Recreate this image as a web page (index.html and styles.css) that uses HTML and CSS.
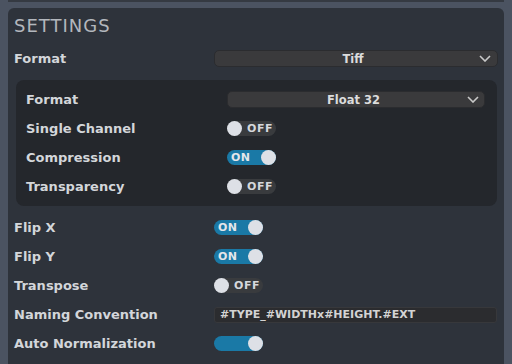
FILE: index.html
```html
<!DOCTYPE html>
<html lang="en">
<head>
    <meta charset="UTF-8">
    <meta name="viewport" content="width=device-width, initial-scale=1.0">
    <title>Settings</title>
    <link rel="stylesheet" href="styles.css">
</head>
<body>
    <div class="prev-panel"></div>

    <section class="panel">
        <h2 class="title">SETTINGS</h2>

        <div class="row">
            <span class="label">Format</span>
            <div class="select">
                <span class="select-value">Tiff</span>
                <svg class="chevron" width="12" height="7" viewBox="0 0 12 7"><polyline points="1,1 6,6 11,1"/></svg>
            </div>
        </div>

        <div class="group">
            <div class="row">
                <span class="label">Format</span>
                <div class="select">
                    <span class="select-value">Float 32</span>
                    <svg class="chevron" width="12" height="7" viewBox="0 0 12 7"><polyline points="1,1 6,6 11,1"/></svg>
                </div>
            </div>
            <div class="row">
                <span class="label">Single Channel</span>
                <span class="toggle off"><span class="knob"></span><span class="toggle-text">OFF</span></span>
            </div>
            <div class="row">
                <span class="label">Compression</span>
                <span class="toggle on"><span class="toggle-text">ON</span><span class="knob"></span></span>
            </div>
            <div class="row">
                <span class="label">Transparency</span>
                <span class="toggle off"><span class="knob"></span><span class="toggle-text">OFF</span></span>
            </div>
        </div>

        <div class="row">
            <span class="label">Flip X</span>
            <span class="toggle on"><span class="toggle-text">ON</span><span class="knob"></span></span>
        </div>
        <div class="row">
            <span class="label">Flip Y</span>
            <span class="toggle on"><span class="toggle-text">ON</span><span class="knob"></span></span>
        </div>
        <div class="row">
            <span class="label">Transpose</span>
            <span class="toggle off"><span class="knob"></span><span class="toggle-text">OFF</span></span>
        </div>
        <div class="row">
            <span class="label">Naming Convention</span>
            <input class="text-input" type="text" value="#TYPE_#WIDTHx#HEIGHT.#EXT">
        </div>
        <div class="row">
            <span class="label">Auto Normalization</span>
            <span class="toggle on"><span class="toggle-text"></span><span class="knob"></span></span>
        </div>
    </section>
</body>
</html>
```

FILE: styles.css
```css
body {
    margin: 0;
    height: 364px;
    overflow: hidden;
    background-color: #4b5361;
    font-family: "DejaVu Sans", sans-serif;
    color: #d3d6da;
}
.prev-panel {
    height: 2px;
    margin: 0 8px;
    background-color: #353a42;
}
.panel {
    margin: 6px 8px 0 8px;
    padding: 8px 6px 20px 6px;
    min-height: 400px;
    background-color: #2e333b;
    border-radius: 6px;
}
.title {
    margin: 0 0 8px 0;
    font-size: 18px;
    line-height: 20px;
    font-weight: normal;
    letter-spacing: 1px;
    color: #b3b7bd;
}
.row {
    display: grid;
    grid-template-columns: 200px 1fr;
    align-items: center;
    height: 29px;
}
.label {
    font-size: 13px;
    font-weight: bold;
    white-space: nowrap;
}
.group {
    margin: 7px 1px 7px 2px;
    padding: 5px 12px 5px 10px;
    background-color: #24272c;
    border-radius: 8px;
}
.group .row {
    grid-template-columns: 201px 1fr;
}
.select {
    display: flex;
    align-items: center;
    height: 17px;
    padding-right: 6px;
    background-color: #3a3a3c;
    border: 1px solid #2b2c2f;
    border-radius: 5px;
    box-sizing: border-box;
}
.group .select {
    padding-right: 5px;
}
.select-value {
    flex: 1;
    padding-left: 12px;
    font-size: 11.5px;
    font-weight: bold;
    text-align: center;
    color: #dcdcdc;
}
.chevron {
    fill: none;
    stroke: #c9c9c9;
    stroke-width: 1.6;
}
.toggle {
    display: flex;
    align-items: center;
    justify-content: space-between;
    justify-self: start;
    width: 49px;
    height: 15px;
    border-radius: 8px;
    box-sizing: border-box;
}
.toggle.on {
    background-color: #1a79a6;
}
.toggle.off {
    background-color: #393b3e;
}
.knob {
    width: 15px;
    height: 15px;
    border-radius: 50%;
    background-color: #dde0e6;
}
.toggle-text {
    font-size: 11px;
    font-weight: bold;
    letter-spacing: 0.5px;
    color: #e4e6ea;
}
.toggle.on .toggle-text {
    padding-left: 4px;
}
.toggle.off .toggle-text {
    padding-right: 3px;
    color: #d6d8dc;
}
.text-input {
    height: 16px;
    margin: 0 1px 0 0;
    padding: 0 5px;
    background-color: #2b2c2f;
    border: 1px solid #37383b;
    border-radius: 3px;
    box-sizing: border-box;
    font-family: "DejaVu Sans", sans-serif;
    font-size: 11px;
    font-weight: bold;
    color: #d3d3d3;
    outline: none;
}
```
